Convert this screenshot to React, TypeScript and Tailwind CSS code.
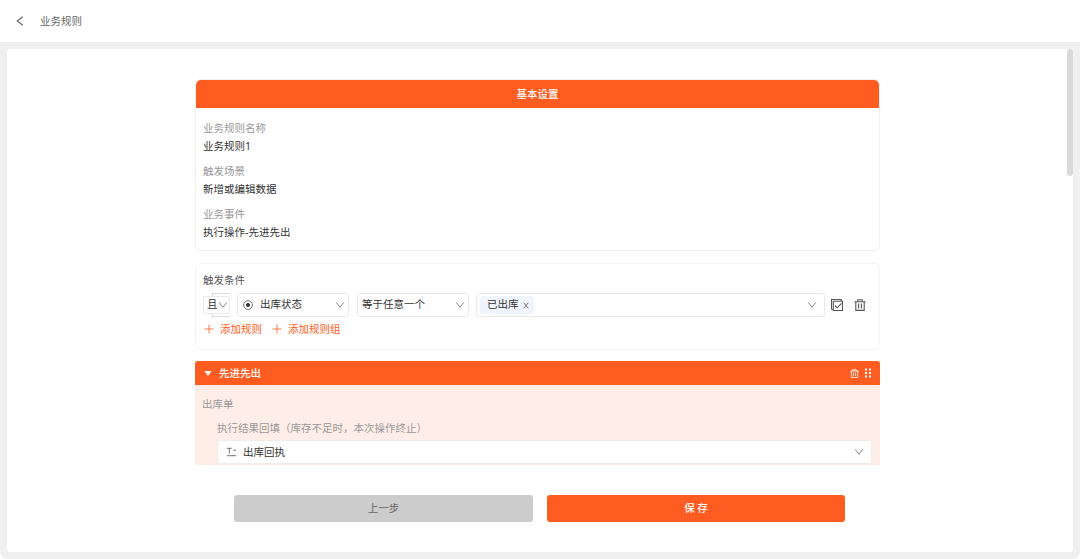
import React from "react";
import clsx from "clsx";

const settings = [
  { label: "业务规则名称", value: "业务规则1" },
  { label: "触发场景", value: "新增或编辑数据" },
  { label: "业务事件", value: "执行操作-先进先出" },
];

interface IconProps {
  className?: string;
}

function Chevron({ className }: IconProps) {
  return (
    <svg
      viewBox="0 0 10 8"
      className={clsx("h-2 w-2.5 shrink-0", className)}
      fill="none"
      stroke="currentColor"
      strokeWidth="0.9"
    >
      <path d="M1.2 1.3 5 6.3l3.8-5" />
    </svg>
  );
}

function TrashIcon({ className }: IconProps) {
  return (
    <svg
      viewBox="0 0 12 12"
      className={className}
      fill="none"
      stroke="currentColor"
      strokeWidth="1.1"
    >
      <path d="M.3 2.7h11.4M3.8 2.7V.8h4.4v1.9M1.8 2.7v8.7h8.4V2.7M4.6 4.6v4.8M7.4 4.6v4.8" />
    </svg>
  );
}

function CopyCheckIcon({ className }: IconProps) {
  return (
    <svg
      viewBox="0 0 12 12"
      className={className}
      fill="none"
      stroke="currentColor"
      strokeWidth="1.1"
    >
      <path d="M2.3 2.3h9.2v9.2H2.3zM2.3 10.2H.5V.5h9.7v1.8" />
      <path d="m4 6.5 2.2 2.3 4.3-4.5" />
    </svg>
  );
}

function RadioIcon() {
  return (
    <svg viewBox="0 0 10 10" className="h-2.5 w-2.5 shrink-0">
      <circle cx="5" cy="5" r="4.4" fill="none" stroke="#555" strokeWidth="0.8" />
      <circle cx="5" cy="5" r="2.1" fill="#333" />
    </svg>
  );
}

function TextFieldIcon() {
  return (
    <svg
      viewBox="0 0 11 10"
      className="h-2.5 w-[11px] shrink-0"
      fill="none"
      stroke="#666"
      strokeWidth="0.9"
    >
      <path d="M.8 1.3h5M3.3 1.3v5.4M7.2 3.2h3M.8 8.7h9.4" />
    </svg>
  );
}

function AddButton({ label }: { label: string }) {
  return (
    <button className="flex items-center gap-1.5 text-[#ff5c22]">
      <svg viewBox="0 0 10 10" className="h-2.5 w-2.5" stroke="currentColor" strokeWidth="0.8">
        <path d="M.5 5h9M5 .5v9" />
      </svg>
      {label}
    </button>
  );
}

function BasicSettings() {
  return (
    <section className="h-[172px] overflow-hidden rounded-md border border-[#f0f0f0]">
      <h2 className="-mx-px -mt-px h-[29px] bg-[#ff5c22] pt-px text-center leading-[29px] font-medium text-white">
        基本设置
      </h2>
      <dl className="flex flex-col gap-[7.2px] px-[7px] pt-[11px]">
        {settings.map((item) => (
          <div key={item.label} className="leading-[18px]">
            <dt className="text-[#999]">{item.label}</dt>
            <dd className="text-[#333]">{item.value}</dd>
          </div>
        ))}
      </dl>
    </section>
  );
}

function Conditions() {
  return (
    <section className="mt-3 h-[87px] rounded-md border border-[#f4f4f4] px-[7px] pt-2">
      <h3 className="leading-4 text-[#555]">触发条件</h3>
      <div className="mt-[5px] flex h-6 items-center text-[#333]">
        {/* Bracket that joins the rules of one group */}
        <div className="relative h-6 w-[27px]">
          <div className="absolute inset-y-0 right-0 left-[9px] border-y border-l border-[#ddd]" />
          <div className="relative mt-[3px] flex h-[18px] items-center justify-between rounded-[3px] border border-[#eaeaea] bg-white pr-[1px] pl-[3px]">
            且
            <Chevron className="text-[#777]" />
          </div>
        </div>
        <div className="ml-[7px] flex h-6 w-28 items-center rounded-[3px] border border-[#eaeaea] pr-[3px] pl-[5px]">
          <RadioIcon />
          <span className="ml-[7px] flex-1">出库状态</span>
          <Chevron className="text-[#777]" />
        </div>
        <div className="ml-2 flex h-6 w-28 items-center justify-between rounded-[3px] border border-[#eaeaea] pr-[3px] pl-1">
          等于任意一个
          <Chevron className="text-[#777]" />
        </div>
        <div className="ml-[7px] flex h-6 w-[349px] items-center justify-between rounded-[3px] border border-[#eaeaea] pr-[7px] pl-[3px]">
          <span className="flex h-[18px] items-center gap-1 rounded-[3px] bg-[#f0f4fd] pr-[5px] pl-[7px]">
            已出库
            <svg viewBox="0 0 6 7" className="h-[7px] w-1.5" stroke="#555" strokeWidth="0.8">
              <path d="m.6.7 4.8 5.6M5.4.7.6 6.3" />
            </svg>
          </span>
          <Chevron className="text-[#777]" />
        </div>
        <CopyCheckIcon className="ml-1.5 h-3 w-3 text-[#555]" />
        <TrashIcon className="ml-[11px] h-3 w-3 text-[#555]" />
      </div>
      <div className="mt-1 flex gap-2.5 pl-px leading-4">
        <AddButton label="添加规则" />
        <AddButton label="添加规则组" />
      </div>
    </section>
  );
}

function ActionCard() {
  return (
    <section className="mt-[11px] h-[104px] overflow-hidden rounded-t-[3px] bg-[#ffeee7]">
      <div className="flex h-6 items-center bg-[#ff5c22] pr-[9px] pl-[9px] text-white">
        <svg viewBox="0 0 8 5" className="h-[5px] w-2" fill="currentColor">
          <path d="M.4 0h7.2L4 5z" />
        </svg>
        <span className="ml-[7px] flex-1 pt-0.5 font-medium">先进先出</span>
        <TrashIcon className="h-[9px] w-[9px]" />
        <svg viewBox="0 0 6 10" className="ml-1.5 h-2.5 w-1.5" fill="currentColor">
          <path d="M0 .5h2v2H0zM4 .5h2v2H4zM0 4h2v2H0zM4 4h2v2H4zM0 7.5h2v2H0zM4 7.5h2v2H4z" />
        </svg>
      </div>
      <div className="pr-2 pl-[7px] text-[#999]">
        <p className="pt-[11px] leading-4">出库单</p>
        <p className="mt-2 pl-[15px] leading-4">
          执行结果回填（库存不足时，本次操作终止）
        </p>
        <div className="mt-1 ml-[15px] flex h-6 items-center rounded-[3px] border border-[#f3ebe8] bg-white pr-[7px] pl-2">
          <TextFieldIcon />
          <span className="ml-1.5 flex-1 pt-0.5 text-[#333]">出库回执</span>
          <Chevron className="text-[#777]" />
        </div>
      </div>
    </section>
  );
}

export default function App() {
  return (
    <div className="h-[559px] w-[1080px] overflow-hidden rounded-lg bg-[#f0f0f0] font-['Noto_Sans','Noto_Sans_CJK_SC',sans-serif] text-[10.5px]">
      <header className="flex h-[42px] items-center bg-white pl-4 text-[#666]">
        <svg
          viewBox="0 0 8 10"
          className="h-2.5 w-2"
          fill="none"
          stroke="currentColor"
          strokeWidth="1.1"
        >
          <path d="M6.8.8 1.2 5l5.6 4.2" />
        </svg>
        <h1 className="ml-4 pt-0.5">业务规则</h1>
      </header>

      <main className="relative mx-[7px] mt-[7px] h-[503px] rounded bg-white pt-[30px]">
        <div className="absolute top-0 right-0 h-[127px] w-[6px] rounded-full bg-[#d9d9d9]" />
        <div className="ml-[188px] w-[685px]">
          <BasicSettings />
          <Conditions />
          <ActionCard />
        </div>
        <footer className="mt-[30px] ml-[227px] flex gap-[14px]">
          <button className="h-[27px] w-[299px] rounded-[3px] bg-[#ccc] text-[#666]">
            上一步
          </button>
          <button className="h-[27px] w-[298px] rounded-[3px] bg-[#ff5c22] font-medium text-white">
            保 存
          </button>
        </footer>
      </main>
    </div>
  );
}
